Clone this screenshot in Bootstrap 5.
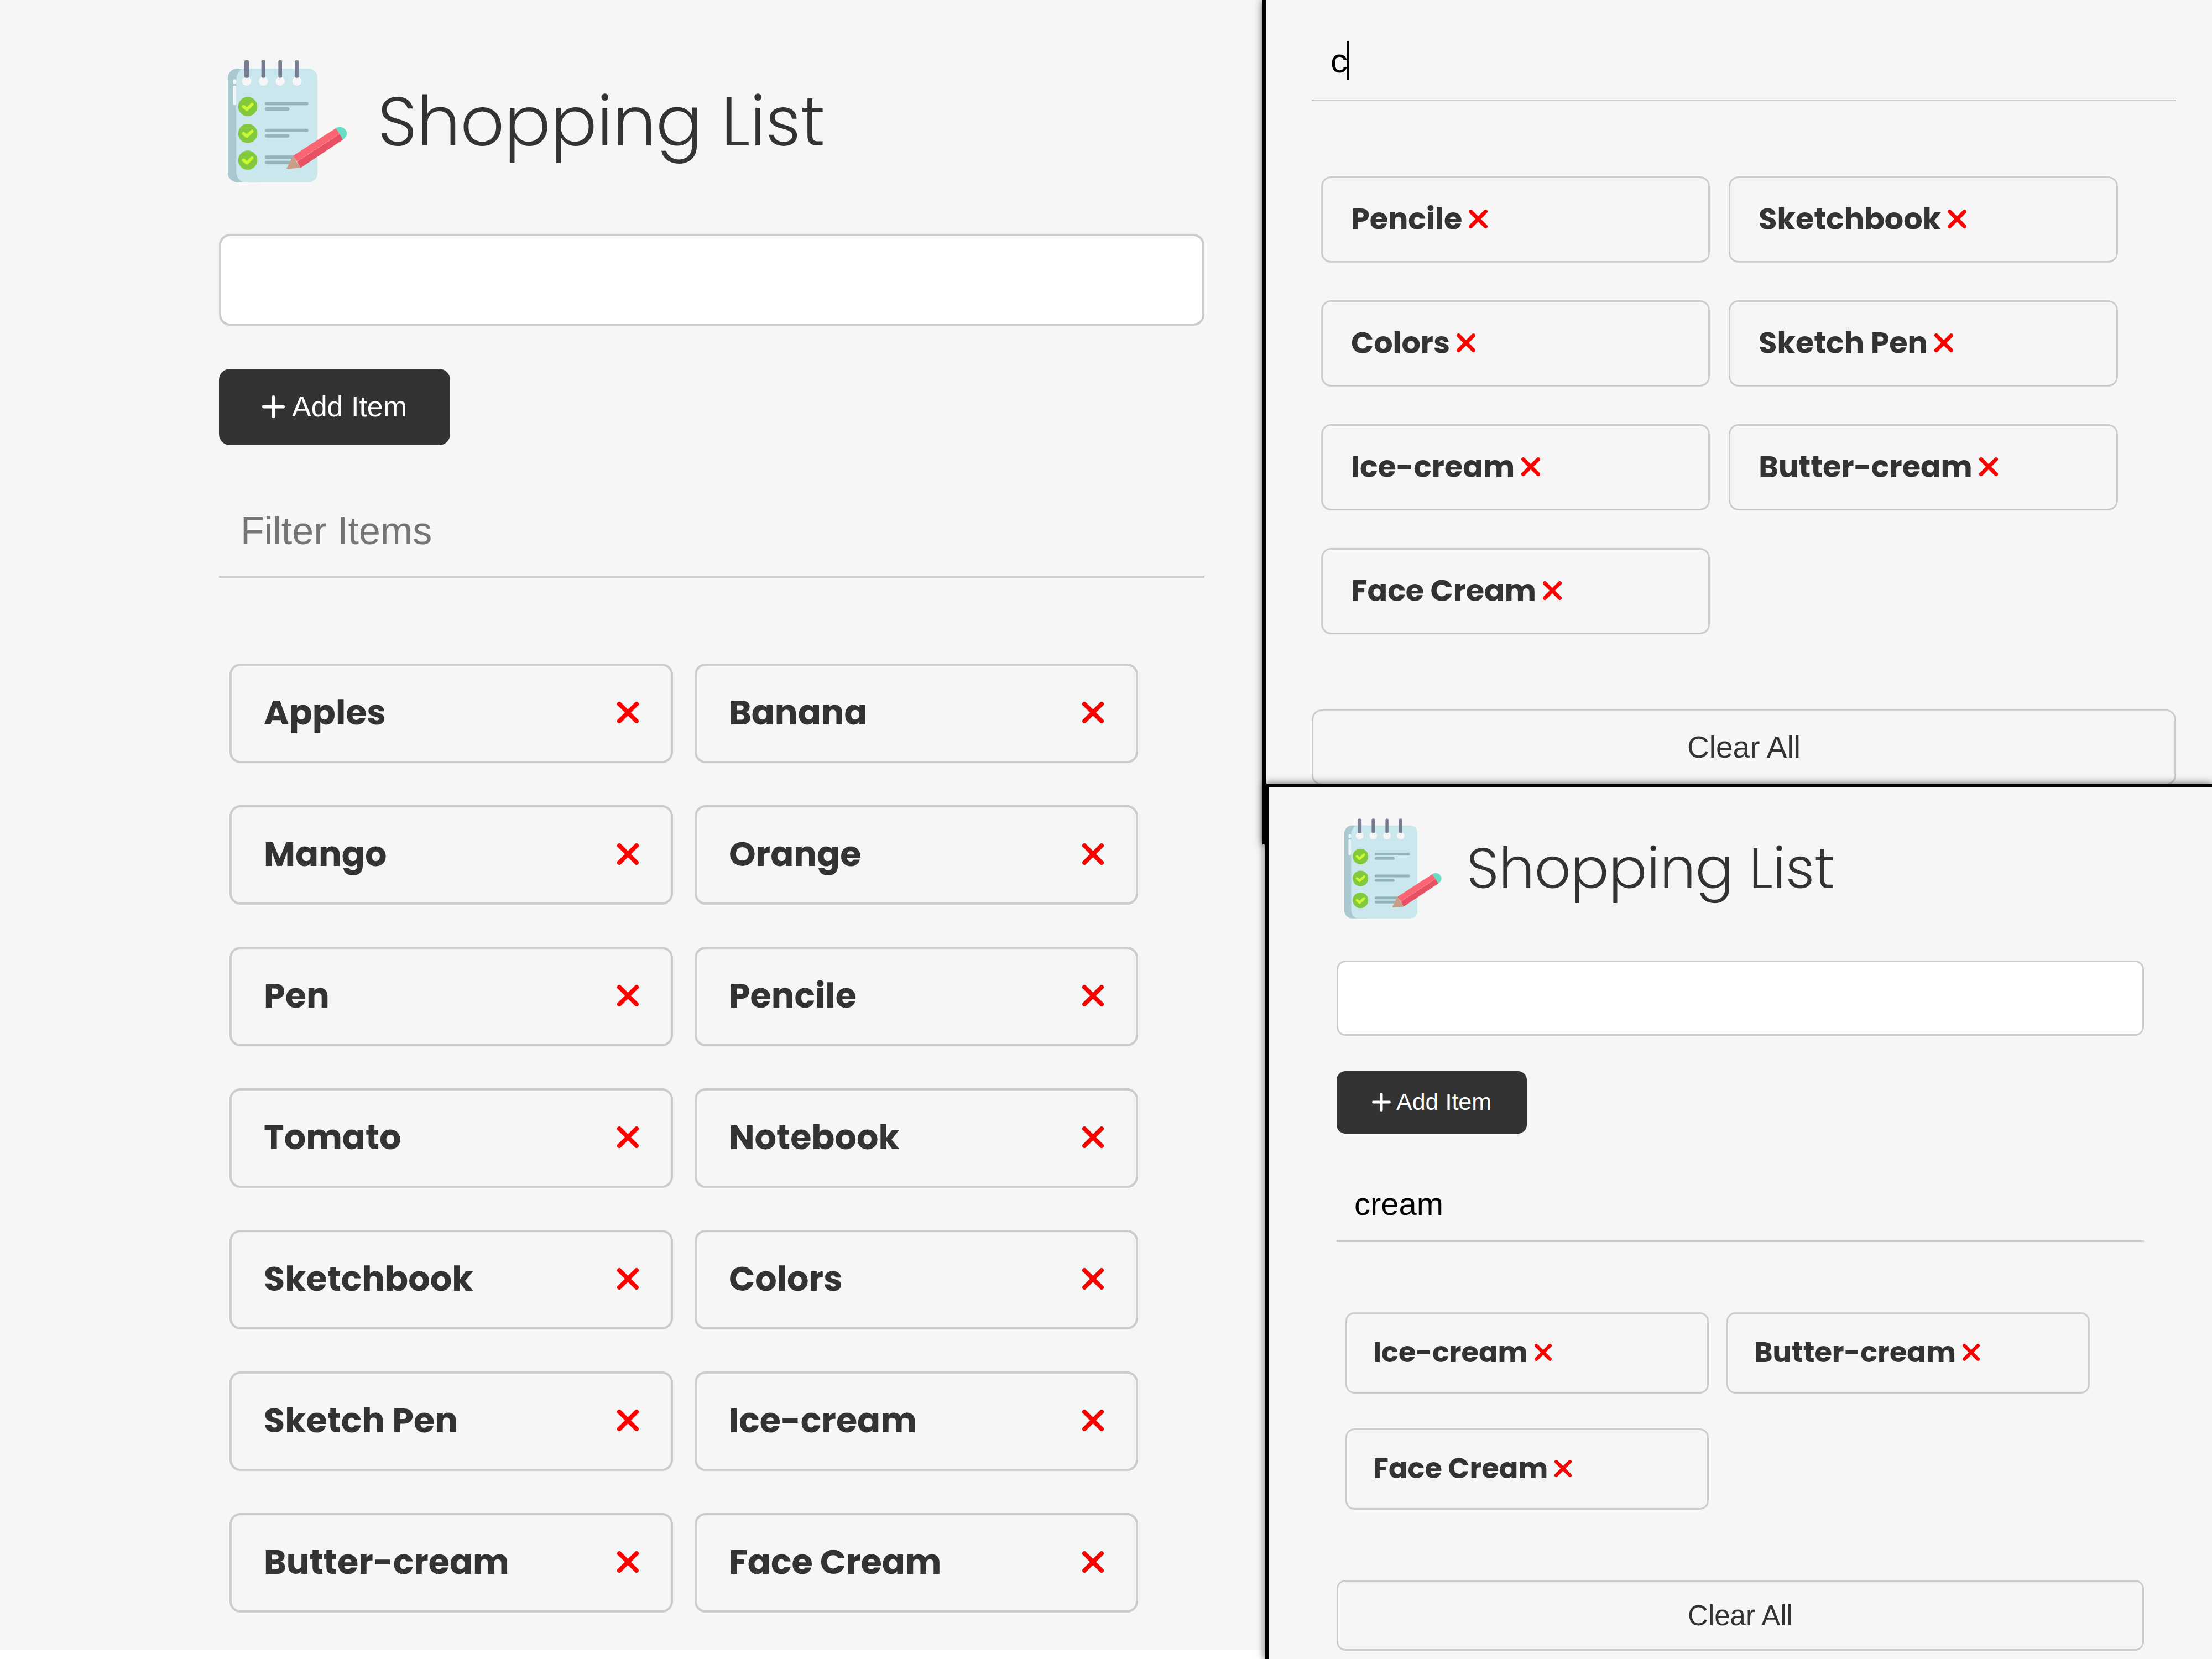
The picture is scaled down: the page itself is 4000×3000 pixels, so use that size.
<!DOCTYPE html>
<html lang="en">
<head>
<meta charset="utf-8">
<meta name="viewport" content="width=device-width, initial-scale=1">
<title>Shopping List</title>
<link href="https://cdn.jsdelivr.net/npm/bootstrap@5.3.0/dist/css/bootstrap.min.css" rel="stylesheet">
<style>
body { background: #fff; color: #333; font-family: "Poppins", "Inter", "Open Sans", sans-serif; }
.board { display: grid; grid-template-columns: 2283fr 1717fr; min-height: 100vh; overflow: hidden; }

/* Sizes of the three views: large, medium and small */
.view { background: #f6f6f6; }
.view-lg {
  --logo: 240px; --logo-x: 4px; --title: 124px; --title-gap: 43px; --title-drop: 10px; --title-end: 83px;
  --field: 166px; --line: 4px; --round: 20px; --section: 78px;
  --btn-h: 138px; --btn-x: 78px; --btn-font: 52px; --plus: 41px; --plus-gap: 13px;
  --filter-h: 164px; --filter-font: 70px; --filter-x: 39px;
  --list-gap: 155px; --list-x: 19px; --row-gap: 76px; --col-gap: 39px;
  --item-h: 180px; --item-x: 58px; --item-font: 62px; --cross: 39px;
  padding: 90px 105px 68px 396px;
}
.view-md {
  --line: 3px; --round: 18px;
  --filter-h: 143px; --filter-font: 62px; --filter-x: 34px;
  --list-gap: 136px; --list-x: 17px; --row-gap: 68px; --col-gap: 34px;
  --item-h: 156px; --item-x: 51px; --item-font: 54px; --cross: 34px;
  --clear-h: 137px; --clear-font: 55px;
  padding: 40px 65px 107px 82px;
}
.view-sm {
  --logo: 196px; --logo-x: 4px; --title: 102px; --title-gap: 35px; --title-drop: 8px; --title-end: 68px;
  --field: 136px; --line: 3px; --round: 16px; --section: 64px;
  --btn-h: 113px; --btn-x: 64px; --btn-font: 43px; --plus: 34px; --plus-gap: 10px;
  --filter-h: 134px; --filter-font: 58px; --filter-x: 32px;
  --list-gap: 127px; --list-x: 16px; --row-gap: 63px; --col-gap: 32px;
  --item-h: 147px; --item-x: 47px; --item-font: 51px; --cross: 31px;
  --clear-h: 128px; --clear-font: 51px;
  padding: 41px 123px 15px 123px;
}
.framed { border-left: 7px solid #000; box-shadow: 0 0 14px rgba(0,0,0,.6); }
.overlap { border-top: 7px solid #000; margin: -110px 0 0 4px; position: relative; }

.brand-row { gap: var(--title-gap); margin-bottom: var(--title-end); padding-left: var(--logo-x); }
.brand-row > svg { width: var(--logo); height: auto; flex: none; }
.brand-row h1 { font-size: var(--title); font-weight: 300; line-height: 1; margin: 0; padding-top: var(--title-drop); white-space: nowrap; }

.item-field { height: var(--field); border: var(--line) solid #ccc; border-radius: var(--round); font-size: var(--filter-font); margin-bottom: var(--section); }
.add-btn { height: var(--btn-h); padding: 0 var(--btn-x) 2px; gap: var(--plus-gap); border: 0; border-radius: var(--round); background: #333; color: #fff; font: 400 var(--btn-font)/1 "Liberation Sans", Arial, sans-serif; margin-bottom: calc(var(--section) - 2px); }
.add-btn svg { width: var(--plus); height: var(--plus); }
.filter-field { height: var(--filter-h); padding: 0 var(--filter-x) 2px; border: 0; border-bottom: var(--line) solid #ccc; border-radius: 0; background: transparent; color: #000; font: 400 var(--filter-font)/1 "Liberation Sans", Arial, sans-serif; }
.filter-field::placeholder { color: #757575; opacity: 1; }
.caret { position: absolute; left: 63px; top: 34px; width: 4px; height: 70px; background: #000; }

.items { margin: var(--list-gap) 0 0 var(--list-x); gap: var(--row-gap) var(--col-gap); }
.items-wrap { container-type: inline-size; }
.items li { width: 45cqw; height: var(--item-h); padding: 0 var(--item-x) 3px; border: var(--line) solid #ccc; border-radius: var(--round); font-size: var(--item-font); font-weight: 700; line-height: 1; }
.view-md li, .view-sm li { gap: 12px; }
.items button { padding: 0; border: 0; border-radius: 0; line-height: 0; flex: none; }
.items svg { width: var(--cross); height: var(--cross); stroke: #f00; }
.clear-btn { height: var(--clear-h); margin-top: var(--list-gap); border: var(--line) solid #ccc; border-radius: var(--round); color: #333; font: 400 var(--clear-font)/1 "Liberation Sans", Arial, sans-serif; padding: 0; }
</style>
</head>
<body>
<svg class="d-none" aria-hidden="true">
  <symbol id="cross" viewBox="0 0 39 39"><path d="M4 4 35 35M35 4 4 35" fill="none" stroke-width="8" stroke-linecap="round"/></symbol>
  <symbol id="plus" viewBox="0 0 41 41"><path d="M20.500 3V38M3 20.500H38" fill="none" stroke="#fff" stroke-width="6" stroke-linecap="round"/></symbol>
  <symbol id="notepad" viewBox="0 0 720 750">
    <rect x="36" y="102" width="200" height="617" rx="52" fill="#a9c8cf"/>
    <path d="M125 102H474A48 48 0 0 1 522 150V671A48 48 0 0 1 474 719H125A46 60 0 0 1 82 655V166A46 60 0 0 1 125 102Z" fill="#c9e7ed"/>
    <g fill="#eef6fb"><rect x="64" y="160" width="18" height="26" rx="9"/><rect x="64" y="194" width="18" height="106" rx="9"/></g>
    <g fill="#f6f6f6"><circle cx="138" cy="170" r="25"/><circle cx="229" cy="170" r="25"/><circle cx="320" cy="170" r="25"/><circle cx="411" cy="170" r="25"/></g>
    <g fill="#767d91"><rect x="126" y="57" width="25" height="95" rx="7"/><rect x="218" y="57" width="22" height="95" rx="7"/><rect x="310" y="57" width="20" height="95" rx="7"/><rect x="400" y="57" width="21" height="95" rx="7"/></g>
    <g fill="#82c93d"><circle cx="144" cy="308" r="52"/><circle cx="144" cy="454" r="52"/><circle cx="144" cy="599" r="52"/></g>
    <path d="M121 308 139 323 167 296M121 454 139 469 167 442M121 599 139 614 167 587" fill="none" stroke="#cdf933" stroke-width="17" stroke-linecap="round" stroke-linejoin="round"/>
    <path d="M247 292H464M247 321H362M247 437H464M247 467H362M247 583H400M247 611H380" stroke="#93b5ba" stroke-width="18" stroke-linecap="round"/>
    <path d="M622 425C645 408 678 425 682 452C682 468 672 480 658 488Z" fill="#69dcc5"/>
    <path d="M390 575 622 425 642 456 412 606Z" fill="#fb6572"/>
    <path d="M412 606 642 456 660 488 430 641Z" fill="#e75163"/>
    <path d="M390 575 430 641 354 646Z" fill="#cc9c84"/>
    <path d="M412 606 642 456" stroke="#ff8c96" stroke-width="4" stroke-dasharray="14 8"/>
  </symbol>
</svg>

<main class="board">
  <section class="view view-lg align-self-start">
    <header class="brand-row d-flex align-items-center">
      <svg viewBox="0 0 720 750" role="img" aria-label="Notepad"><use href="#notepad"/></svg>
      <h1>Shopping List</h1>
    </header>
    <form>
      <input type="text" class="form-control item-field" aria-label="Enter item">
      <button type="button" class="btn add-btn d-flex align-items-center"><svg aria-hidden="true"><use href="#plus"/></svg>Add Item</button>
    </form>
    <input type="text" class="form-control filter-field" placeholder="Filter Items" aria-label="Filter items">
    <div class="items-wrap">
      <ul class="items list-unstyled d-flex flex-wrap mb-0">
        <li class="d-flex align-items-center justify-content-between">Apples<button type="button" class="btn" aria-label="Remove Apples"><svg><use href="#cross"/></svg></button></li>
        <li class="d-flex align-items-center justify-content-between">Banana<button type="button" class="btn" aria-label="Remove Banana"><svg><use href="#cross"/></svg></button></li>
        <li class="d-flex align-items-center justify-content-between">Mango<button type="button" class="btn" aria-label="Remove Mango"><svg><use href="#cross"/></svg></button></li>
        <li class="d-flex align-items-center justify-content-between">Orange<button type="button" class="btn" aria-label="Remove Orange"><svg><use href="#cross"/></svg></button></li>
        <li class="d-flex align-items-center justify-content-between">Pen<button type="button" class="btn" aria-label="Remove Pen"><svg><use href="#cross"/></svg></button></li>
        <li class="d-flex align-items-center justify-content-between">Pencile<button type="button" class="btn" aria-label="Remove Pencile"><svg><use href="#cross"/></svg></button></li>
        <li class="d-flex align-items-center justify-content-between">Tomato<button type="button" class="btn" aria-label="Remove Tomato"><svg><use href="#cross"/></svg></button></li>
        <li class="d-flex align-items-center justify-content-between">Notebook<button type="button" class="btn" aria-label="Remove Notebook"><svg><use href="#cross"/></svg></button></li>
        <li class="d-flex align-items-center justify-content-between">Sketchbook<button type="button" class="btn" aria-label="Remove Sketchbook"><svg><use href="#cross"/></svg></button></li>
        <li class="d-flex align-items-center justify-content-between">Colors<button type="button" class="btn" aria-label="Remove Colors"><svg><use href="#cross"/></svg></button></li>
        <li class="d-flex align-items-center justify-content-between">Sketch Pen<button type="button" class="btn" aria-label="Remove Sketch Pen"><svg><use href="#cross"/></svg></button></li>
        <li class="d-flex align-items-center justify-content-between">Ice-cream<button type="button" class="btn" aria-label="Remove Ice-cream"><svg><use href="#cross"/></svg></button></li>
        <li class="d-flex align-items-center justify-content-between">Butter-cream<button type="button" class="btn" aria-label="Remove Butter-cream"><svg><use href="#cross"/></svg></button></li>
        <li class="d-flex align-items-center justify-content-between">Face Cream<button type="button" class="btn" aria-label="Remove Face Cream"><svg><use href="#cross"/></svg></button></li>
      </ul>
    </div>
  </section>

  <div class="d-flex flex-column">
    <section class="view view-md framed">
      <div class="position-relative">
        <input type="text" class="form-control filter-field" value="c" aria-label="Filter items">
        <span class="caret"></span>
      </div>
      <div class="items-wrap">
        <ul class="items list-unstyled d-flex flex-wrap mb-0">
          <li class="d-flex align-items-center">Pencile<button type="button" class="btn" aria-label="Remove Pencile"><svg><use href="#cross"/></svg></button></li>
          <li class="d-flex align-items-center">Sketchbook<button type="button" class="btn" aria-label="Remove Sketchbook"><svg><use href="#cross"/></svg></button></li>
          <li class="d-flex align-items-center">Colors<button type="button" class="btn" aria-label="Remove Colors"><svg><use href="#cross"/></svg></button></li>
          <li class="d-flex align-items-center">Sketch Pen<button type="button" class="btn" aria-label="Remove Sketch Pen"><svg><use href="#cross"/></svg></button></li>
          <li class="d-flex align-items-center">Ice-cream<button type="button" class="btn" aria-label="Remove Ice-cream"><svg><use href="#cross"/></svg></button></li>
          <li class="d-flex align-items-center">Butter-cream<button type="button" class="btn" aria-label="Remove Butter-cream"><svg><use href="#cross"/></svg></button></li>
          <li class="d-flex align-items-center">Face Cream<button type="button" class="btn" aria-label="Remove Face Cream"><svg><use href="#cross"/></svg></button></li>
        </ul>
      </div>
      <button type="button" class="btn clear-btn w-100">Clear All</button>
    </section>

    <section class="view view-sm framed overlap flex-grow-1">
      <header class="brand-row d-flex align-items-center">
        <svg viewBox="0 0 720 750" role="img" aria-label="Notepad"><use href="#notepad"/></svg>
        <h1>Shopping List</h1>
      </header>
      <form>
        <input type="text" class="form-control item-field" aria-label="Enter item">
        <button type="button" class="btn add-btn d-flex align-items-center"><svg aria-hidden="true"><use href="#plus"/></svg>Add Item</button>
      </form>
      <input type="text" class="form-control filter-field" value="cream" aria-label="Filter items">
      <div class="items-wrap">
        <ul class="items list-unstyled d-flex flex-wrap mb-0">
          <li class="d-flex align-items-center">Ice-cream<button type="button" class="btn" aria-label="Remove Ice-cream"><svg><use href="#cross"/></svg></button></li>
          <li class="d-flex align-items-center">Butter-cream<button type="button" class="btn" aria-label="Remove Butter-cream"><svg><use href="#cross"/></svg></button></li>
          <li class="d-flex align-items-center">Face Cream<button type="button" class="btn" aria-label="Remove Face Cream"><svg><use href="#cross"/></svg></button></li>
        </ul>
      </div>
      <button type="button" class="btn clear-btn w-100">Clear All</button>
    </section>
  </div>
</main>
<script src="https://cdn.jsdelivr.net/npm/bootstrap@5.3.0/dist/js/bootstrap.bundle.min.js"></script>
</body>
</html>
